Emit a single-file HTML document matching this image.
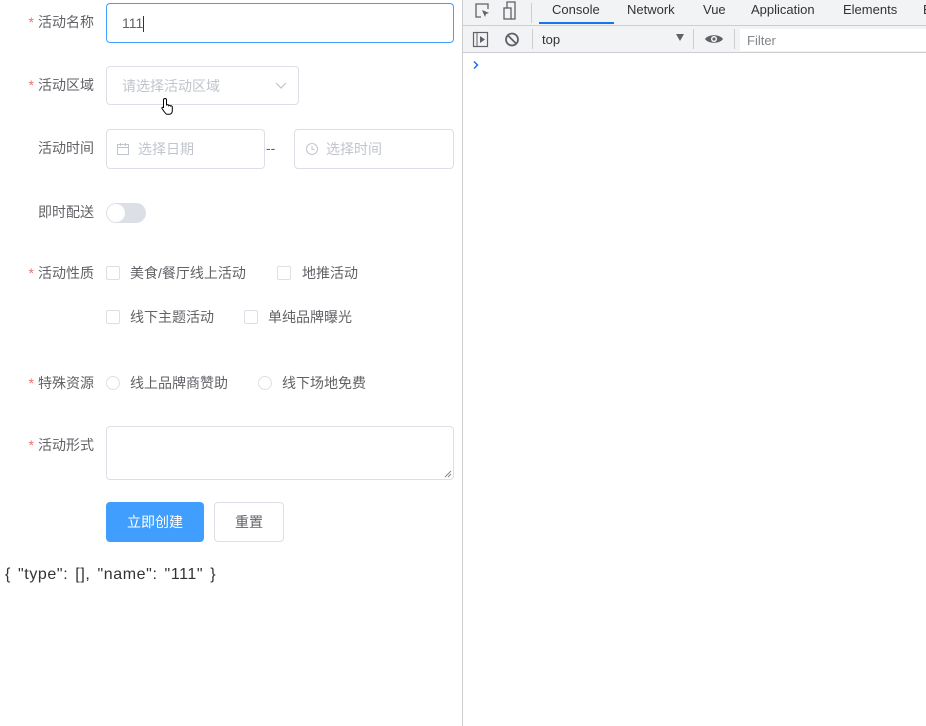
<!DOCTYPE html>
<html><head><meta charset="utf-8"><style>
*{box-sizing:border-box;margin:0;padding:0}
body{width:926px;height:726px;overflow:hidden;background:#fff;font-family:"Liberation Sans","Noto Sans CJK SC",sans-serif;font-size:14px;color:#606266;position:relative}
.a{position:absolute}
.lbl{position:absolute;right:832px;width:100px;text-align:right;font-size:14px;color:#606266;line-height:20px}
.lbl b{color:#f56c6c;font-weight:normal;margin-right:4px}
.inp{position:absolute;border:1px solid #dcdfe6;border-radius:4px;background:#fff;color:#c0c4cc;font-size:14px;line-height:38px;padding-left:15px}
.cb{position:absolute;width:14px;height:14px;border:1px solid #dcdfe6;border-radius:2px;background:#fff}
.rd{position:absolute;width:14px;height:14px;border:1px solid #dcdfe6;border-radius:50%}
.t{position:absolute;font-size:14px;color:#606266;line-height:20px}
.dt{font-family:"Liberation Sans",sans-serif;font-size:13px;color:#333;position:absolute;line-height:16px}
</style></head><body>
<div class="lbl" style="top:12px;left:0;right:auto;width:94px"><b>*</b>活动名称</div>
<div class="inp" style="left:106px;top:3px;width:348px;height:40px;border-color:#409eff;color:#606266;line-height:38px">111<span style="display:inline-block;width:1px;height:16px;background:#333;vertical-align:middle"></span></div>

<div class="lbl" style="top:75px;left:0;right:auto;width:94px"><b>*</b>活动区域</div>
<div class="inp" style="left:106px;top:66px;width:193px;height:39px">请选择活动区域<svg class="a" style="left:168px;top:14px" width="12" height="10"><path d="M1 2l5 5 5-5" fill="none" stroke="#c0c4cc" stroke-width="1.2"/></svg></div>
<svg class="a" style="left:160px;top:97px" width="16" height="18"><path d="M5 1.5c1 0 1.5.6 1.5 1.5v5l1-.3c.8 0 1.2.5 1.2.9.5-.5 1.7-.3 1.8.4.6-.4 1.8-.1 1.8.8v4c0 1.5-1 3-2.5 3.5H7C5.5 17 3 13 2 11.5c-.4-.7.3-1.6 1.3-1L3.5 11V3c0-.9.6-1.5 1.5-1.5z" fill="#fff" stroke="#000" stroke-width="1"/></svg>

<div class="lbl" style="top:138px;left:0;right:auto;width:94px">活动时间</div>
<div class="inp" style="left:106px;top:129px;width:159px;height:40px;padding-left:31px">选择日期</div>
<svg class="a" style="left:116px;top:142px" width="14" height="14"><rect x="1.5" y="2.5" width="11" height="10" fill="none" stroke="#c0c4cc"/><path d="M1.5 5.5h11M4.5 1v3M9.5 1v3" stroke="#c0c4cc"/></svg>
<div class="t" style="left:266px;top:138px;color:#606266">--</div>
<div class="inp" style="left:294px;top:129px;width:160px;height:40px;padding-left:31px">选择时间</div>
<svg class="a" style="left:305px;top:142px" width="14" height="14"><circle cx="7" cy="7" r="5.5" fill="none" stroke="#c0c4cc"/><path d="M7 4v3.5h2.5" fill="none" stroke="#c0c4cc"/></svg>

<div class="lbl" style="top:202px;left:0;right:auto;width:94px">即时配送</div>
<div class="a" style="left:106px;top:203px;width:40px;height:20px;border-radius:10px;background:#dcdfe6"></div>
<div class="a" style="left:107px;top:204px;width:18px;height:18px;border-radius:50%;background:#fff"></div>

<div class="lbl" style="top:263px;left:0;right:auto;width:94px"><b>*</b>活动性质</div>
<div class="cb" style="left:106px;top:266px"></div><div class="t" style="left:130px;top:263px">美食/餐厅线上活动</div>
<div class="cb" style="left:277px;top:266px"></div><div class="t" style="left:302px;top:263px">地推活动</div>
<div class="cb" style="left:106px;top:310px"></div><div class="t" style="left:130px;top:307px">线下主题活动</div>
<div class="cb" style="left:244px;top:310px"></div><div class="t" style="left:268px;top:307px">单纯品牌曝光</div>

<div class="lbl" style="top:373px;left:0;right:auto;width:94px"><b>*</b>特殊资源</div>
<div class="rd" style="left:106px;top:376px"></div><div class="t" style="left:130px;top:373px">线上品牌商赞助</div>
<div class="rd" style="left:258px;top:376px"></div><div class="t" style="left:282px;top:373px">线下场地免费</div>

<div class="lbl" style="top:435px;left:0;right:auto;width:94px"><b>*</b>活动形式</div>
<div class="inp" style="left:106px;top:426px;width:348px;height:54px"></div>
<svg class="a" style="left:444px;top:470px" width="8" height="8"><path d="M1 7L7 1M4 7L7 4" stroke="#888"/></svg>

<div class="a" style="left:106px;top:502px;width:98px;height:40px;background:#409eff;border-radius:4px;color:#fff;text-align:center;line-height:40px">立即创建</div>
<div class="a" style="left:214px;top:502px;width:70px;height:40px;border:1px solid #dcdfe6;border-radius:4px;color:#606266;text-align:center;line-height:38px">重置</div>

<div class="t" style="left:5px;top:565px;font-size:16px;color:#333;white-space:pre;letter-spacing:0.6px;word-spacing:2px">{ "type": [], "name": "111" }</div>

<!-- devtools -->
<div class="a" style="left:462px;top:0;width:1px;height:726px;background:#cbcdd1"></div>
<div class="a" style="left:463px;top:0;width:463px;height:53px;background:#f1f3f4;border-bottom:1px solid #cbcdd1"></div>
<div class="a" style="left:463px;top:25px;width:463px;height:1px;background:#cbcdd1"></div>
<svg class="a" style="left:473px;top:1px" width="46" height="22"><path d="M8 16H3V3h12v5" fill="none" stroke="#5f6368" stroke-width="1.3"/><path d="M9 9l7 3-3 1-1 3z" fill="#5f6368"/><rect x="31" y="7" width="7" height="11" fill="none" stroke="#5f6368" stroke-width="1.3"/><path d="M34 7V1h8v17h-4" fill="none" stroke="#5f6368" stroke-width="1.3"/></svg>
<div class="a" style="left:531px;top:3px;width:1px;height:20px;background:#cbcdd1"></div>
<div class="dt" style="left:552px;top:2px">Console</div>
<div class="a" style="left:539px;top:22px;width:75px;height:2px;background:#1a73e8"></div>
<div class="dt" style="left:627px;top:2px">Network</div>
<div class="dt" style="left:703px;top:2px">Vue</div>
<div class="dt" style="left:751px;top:2px">Application</div>
<div class="dt" style="left:843px;top:2px">Elements</div>
<div class="dt" style="left:923px;top:2px">E</div>
<svg class="a" style="left:472px;top:31px" width="48" height="18"><rect x="1.5" y="1.5" width="14" height="14" fill="none" stroke="#5f6368" stroke-width="1.2"/><path d="M5 2v13" stroke="#5f6368"/><path d="M8 5l5 3.5L8 12z" fill="#5f6368"/><circle cx="40" cy="8.5" r="6" fill="none" stroke="#5f6368" stroke-width="1.8"/><path d="M36 4.5l8 8" stroke="#5f6368" stroke-width="1.8"/></svg>
<div class="a" style="left:532px;top:29px;width:1px;height:20px;background:#cbcdd1"></div>
<div class="dt" style="left:542px;top:32px">top</div>
<div class="a" style="left:676px;top:34px;width:0;height:0;border-left:4px solid transparent;border-right:4px solid transparent;border-top:7px solid #5f6368"></div>
<div class="a" style="left:693px;top:29px;width:1px;height:20px;background:#cbcdd1"></div>
<svg class="a" style="left:704px;top:32px" width="20" height="14"><path d="M1 7C4 2 16 2 19 7 16 12 4 12 1 7z" fill="#5f6368"/><circle cx="10" cy="7" r="3" fill="#fff"/><circle cx="10" cy="7" r="1.6" fill="#5f6368"/></svg>
<div class="a" style="left:734px;top:29px;width:1px;height:20px;background:#cbcdd1"></div>
<div class="a" style="left:740px;top:29px;width:186px;height:22px;background:#fff"></div>
<div class="dt" style="left:747px;top:33px;color:#80868b">Filter</div>
<svg class="a" style="left:472px;top:60px" width="8" height="10"><path d="M2 1.5l3.5 3.5L2 8.5" fill="none" stroke="#1a73e8" stroke-width="1.5"/></svg>
</body></html>
